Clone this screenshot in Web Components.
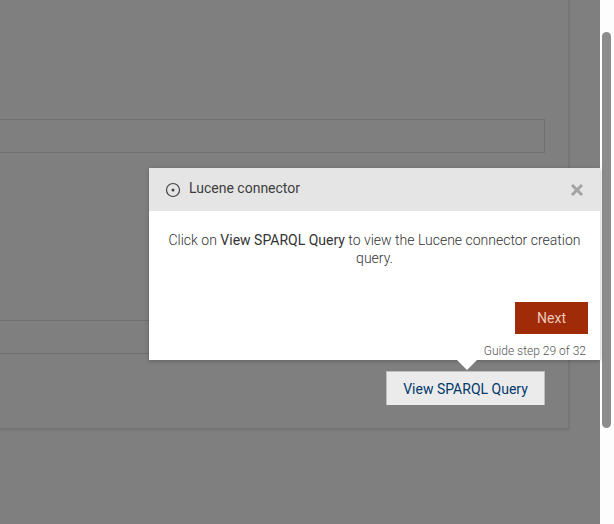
<!DOCTYPE html>
<html>
<head>
<meta charset="utf-8">
<title>Lucene connector guide</title>
<style>
    html, body { margin: 0; padding: 0; background: #fdfdfd; overflow: hidden; }
    body { font-family: Roboto, "Liberation Sans", sans-serif; }
</style>
</head>
<body>
<guide-page>
    <guide-popup slot="popup" title-text="Lucene connector" step="Guide step 29 of 32">
        Click on <b>View SPARQL Query</b> to view the Lucene connector creation query.
    </guide-popup>
</guide-page>

<script>
// Dimmed page behind the guide, with the highlighted button on top
class GuidePage extends HTMLElement {
    constructor() {
        super();
        const shadow = this.attachShadow({ mode: 'open' });
        shadow.innerHTML = `
            <style>
                :host { display: flex; width: 614px; height: 524px; position: relative; overflow: hidden; }
                .stage { width: 600px; height: 524px; background: #7f7f7f; overflow: hidden; }
                .panel {
                    width: 569px;
                    height: 429px;
                    box-sizing: border-box;
                    padding: 119px 23px 0 0;
                    border-right: 1px solid #747474;
                    border-bottom: 1px solid #747474;
                    box-shadow: 0 1px 3px rgba(0, 0, 0, 0.12);
                    display: flex;
                    flex-direction: column;
                }
                .field { height: 34px; box-sizing: border-box; border: 1px solid #6f6f6f; border-left: none; }
                .field.lower { margin-top: 167px; border-right: none; }
                .actions { display: flex; justify-content: flex-end; margin-top: 17px; }
                .view {
                    width: 159px;
                    height: 34px;
                    box-sizing: border-box;
                    display: flex;
                    align-items: center;
                    justify-content: center;
                    background: #ebebeb;
                    border: 1px solid #bdbdbd;
                    border-bottom: none;
                    color: #00396b;
                    font-size: 14px;
                }
                .track { width: 14px; height: 524px; box-sizing: border-box; padding: 32px 3px 0 2px; background: #fdfdfd; }
                .thumb { height: 396px; background: #8c8c8c; border-radius: 5px; }
            </style>
            <div class="stage">
                <div class="panel">
                    <div class="field"></div>
                    <div class="field lower"></div>
                    <div class="actions"><div class="view">View SPARQL Query</div></div>
                </div>
            </div>
            <div class="track"><div class="thumb"></div></div>
            <slot name="popup"></slot>
        `;
    }
}

// Guide step popup with header, message, next button and step counter
class GuidePopup extends HTMLElement {
    constructor() {
        super();
        const shadow = this.attachShadow({ mode: 'open' });
        shadow.innerHTML = `
            <style>
                :host {
                    display: block;
                    position: absolute;
                    left: 149px;
                    top: 168px;
                    width: 451px;
                    height: 192px;
                    background: #fff;
                    box-shadow: 0 1px 4px rgba(0, 0, 0, 0.25);
                    color: #444;
                    font-size: 14px;
                }
                header {
                    height: 43px;
                    box-sizing: border-box;
                    padding: 0 16px 0 16px;
                    background: #e5e5e5;
                    display: flex;
                    align-items: center;
                    gap: 8px;
                    color: #3d3d3d;
                }
                header span { flex: 1; line-height: 41px; align-self: flex-start; }
                .body {
                    padding: 20px 12px 0;
                    text-align: center;
                    font-weight: 300;
                    line-height: 18px;
                    color: #333;
                }
                ::slotted(b), b { font-weight: 400; }
                .foot { display: flex; flex-direction: column; align-items: flex-end; padding-right: 12px; margin-top: 35px; }
                .next {
                    width: 73px;
                    height: 32px;
                    display: flex;
                    align-items: center;
                    justify-content: center;
                    background: #9f2b08;
                    color: #ecc8bb;
                }
                .step { font-size: 12px; font-weight: 300; color: #555; margin: 9px 2px 0 0; line-height: 16px; }
                .arrow {
                    position: absolute;
                    left: 308px;
                    top: 192px;
                    width: 0;
                    height: 0;
                    border-left: 10px solid transparent;
                    border-right: 10px solid transparent;
                    border-top: 10px solid #fff;
                }
            </style>
            <header>
                <svg width="16" height="16" viewBox="0 0 16 16" style="margin-top:1px">
                    <circle cx="8" cy="8" r="6.5" fill="none" stroke="#444" stroke-width="1.2"/>
                    <circle cx="8" cy="8" r="1.5" fill="#444"/>
                </svg>
                <span></span>
                <svg width="14" height="14" viewBox="0 0 14 14" style="margin-top:1px">
                    <path d="M2 2 L12 12 M12 2 L2 12" fill="none" stroke="#a3a3a3" stroke-width="3"/>
                </svg>
            </header>
            <div class="body"><slot></slot></div>
            <div class="foot">
                <div class="next">Next</div>
                <div class="step"></div>
            </div>
            <div class="arrow"></div>
        `;
        shadow.querySelector('header span').textContent = this.getAttribute('title-text');
        shadow.querySelector('.step').textContent = this.getAttribute('step');
    }
}

customElements.define('guide-page', GuidePage);
customElements.define('guide-popup', GuidePopup);
</script>
</body>
</html>
